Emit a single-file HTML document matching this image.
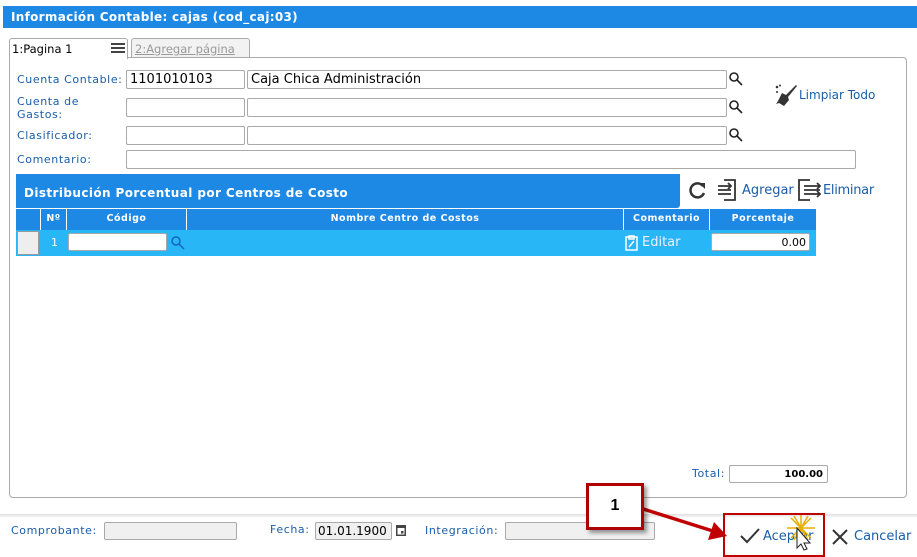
<!DOCTYPE html>
<html><head><meta charset="utf-8"><style>
*{box-sizing:border-box;margin:0;padding:0}
body{width:917px;height:557px;background:#fff;position:relative;overflow:hidden;font-family:"DejaVu Sans","Liberation Sans",sans-serif;font-size:11px;color:#1a5da6}
.a{position:absolute}
.inp{position:absolute;border:1px solid #a9a9a9;background:#fff;border-radius:2px;height:19px;font-size:13px;color:#000;padding-left:3px;line-height:17px}
.lbl{position:absolute;font-size:11px;color:#1a5da6;letter-spacing:.6px}
.th{position:absolute;top:209px;height:21px;color:#fff;font-weight:bold;font-size:9.5px;text-align:center;line-height:20px;border-left:1px solid #fff;letter-spacing:.5px}
</style></head><body>
<div class="a" style="left:3px;top:6px;width:914px;height:22px;background:#1e88e5;color:#fff;font-weight:bold;font-size:12px;line-height:22px;padding-left:8px;letter-spacing:.3px">Información Contable: cajas (cod_caj:03)</div>

<div class="a" style="left:9px;top:57px;width:898px;height:441px;border:1px solid #aaa;border-radius:0 4px 4px 4px"></div>
<div class="a" style="left:9px;top:38px;width:119px;height:21px;border:1px solid #aaa;border-bottom:none;background:#fff;border-radius:3px 3px 0 0;font-size:11.5px;color:#000;padding:3px 0 0 2px">1:Pagina 1</div>
<div class="a" style="left:111px;top:43px;width:14px;height:10px;border-top:2px solid #444;border-bottom:2px solid #444"><div style="margin-top:2px;height:2px;background:#444"></div></div>
<div class="a" style="left:131px;top:38px;width:119px;height:19px;border:1px solid #aaa;border-bottom:none;background:#f2f2f2;border-radius:3px 3px 0 0;font-size:11.5px;color:#999;padding:3px 0 0 3px;text-decoration:underline">2:Agregar página</div>

<div class="lbl" style="left:17px;top:73px">Cuenta Contable:</div>
<div class="inp" style="left:126px;top:70px;width:119px">1101010103</div>
<div class="inp" style="left:247px;top:70px;width:480px">Caja Chica Administración</div>
<div class="lbl" style="left:17px;top:95px;line-height:13px">Cuenta de<br>Gastos:</div>
<div class="inp" style="left:126px;top:98px;width:119px"></div>
<div class="inp" style="left:247px;top:98px;width:480px"></div>
<div class="lbl" style="left:17px;top:129px">Clasificador:</div>
<div class="inp" style="left:126px;top:126px;width:119px"></div>
<div class="inp" style="left:247px;top:126px;width:480px"></div>
<div class="lbl" style="left:17px;top:153px">Comentario:</div>
<div class="inp" style="left:126px;top:150px;width:730px"></div>
<svg class="a" style="left:728px;top:71px" width="16" height="80"><g fill="none" stroke="#222" stroke-width="1.6"><circle cx="6" cy="6" r="4"/><path d="M9 9l5 5"/><circle cx="6" cy="34" r="4"/><path d="M9 37l5 5"/><circle cx="6" cy="62" r="4"/><path d="M9 65l5 5"/></g></svg>
<svg class="a" style="left:774px;top:84px" width="24" height="22"><g fill="#333"><circle cx="3" cy="3" r="1.3"/><circle cx="6" cy="1.5" r="1"/><circle cx="3" cy="8" r="1"/><path d="M8 9l4 2 10-10 1 1-9 11 1 3-5 6-5-3-3 1 2-3z"/></g></svg>
<div class="a" style="left:799px;top:88px;font-size:12px;color:#1a5da6">Limpiar Todo</div>

<div class="a" style="left:16px;top:174px;width:664px;height:34px;background:#1e88e5;border-radius:0 0 3px 0;color:#fff;font-weight:bold;font-size:12px;line-height:38px;padding-left:8px;letter-spacing:.4px">Distribución Porcentual por Centros de Costo</div>
<svg class="a" style="left:688px;top:180px" width="20" height="20"><path d="M15 6A7 7 0 1 0 16 13" fill="none" stroke="#333" stroke-width="2.5"/><path d="M11 3h6v6z" fill="#333"/></svg>
<svg class="a" style="left:716px;top:178px" width="22" height="24"><g fill="none" stroke="#333" stroke-width="1.8"><path d="M8 2h11v20H8"/><path d="M2 8h13M2 12h13M2 16h13"/><path d="M12 5l3 3-3 3" /></g></svg>
<div class="a" style="left:742px;top:183px;font-size:13px;color:#1a5da6">Agregar</div>
<svg class="a" style="left:797px;top:178px" width="26" height="24"><g fill="none" stroke="#333" stroke-width="1.8"><path d="M13 2H2v20h11"/><path d="M7 8h16M7 12h16M7 16h16"/><path d="M20 5l3 3-3 3M20 13l3 3-3 3"/></g></svg>
<div class="a" style="left:823px;top:183px;font-size:13px;color:#1a5da6;letter-spacing:-.3px">Eliminar</div>

<div class="a" style="left:16px;top:209px;width:800px;height:21px;background:#1e88e5"></div>
<div class="th" style="left:40px;width:26px">Nº</div>
<div class="th" style="left:66px;width:120px">Código</div>
<div class="th" style="left:186px;width:437px">Nombre Centro de Costos</div>
<div class="th" style="left:623px;width:86px">Comentario</div>
<div class="th" style="left:709px;width:107px">Porcentaje</div>
<div class="a" style="left:16px;top:230px;width:800px;height:26px;background:#29b6f6"></div>
<div class="a" style="left:17px;top:231px;width:22px;height:24px;background:#eee;border:1px solid #999"></div>
<div class="a" style="left:51px;top:236px;color:#fff;font-size:11px">1</div>
<div class="inp" style="left:68px;top:233px;width:99px;height:18px"></div>
<svg class="a" style="left:170px;top:235px" width="16" height="16"><g fill="none" stroke="#1565c0" stroke-width="1.5"><circle cx="6" cy="6" r="4"/><path d="M9 9l5 5"/></g></svg>
<svg class="a" style="left:625px;top:234px" width="14" height="17"><g fill="none" stroke="#fff" stroke-width="1.5"><rect x="1" y="3" width="11" height="13"/><path d="M4 2h5v3H4zM4 13l5-6"/></g></svg>
<div class="a" style="left:642px;top:235px;color:#eef;font-size:13px">Editar</div>
<div class="inp" style="left:711px;top:233px;width:99px;height:18px;text-align:right;padding-right:3px;font-size:11px">0.00</div>

<div class="lbl" style="left:692px;top:467px">Total:</div>
<div class="inp" style="left:729px;top:465px;width:99px;height:18px;text-align:right;padding-right:4px;font-size:10px;font-weight:bold">100.00</div>

<div class="a" style="left:0;top:514px;width:917px;height:4px;background:linear-gradient(#ddd,#fff)"></div>
<div class="lbl" style="left:11px;top:524px">Comprobante:</div>
<div class="inp" style="left:104px;top:522px;width:133px;height:18px;background:#f0f0f0"></div>
<div class="lbl" style="left:270px;top:523px">Fecha:</div>
<div class="inp" style="left:315px;top:522px;width:77px;height:18px;background:#f0f0f0;font-size:12px;padding-left:2px">01.01.1900</div>
<svg class="a" style="left:395px;top:523px" width="12" height="14"><rect x="1" y="2" width="10" height="11" fill="#444"/><rect x="2.5" y="5" width="7" height="6.5" fill="#fff"/><rect x="6" y="8" width="2.5" height="2.5" fill="#444"/></svg>
<div class="lbl" style="left:425px;top:524px">Integración:</div>
<div class="inp" style="left:505px;top:522px;width:150px;height:18px;background:#f0f0f0"></div>

<svg class="a" style="left:0;top:0" width="917" height="557"><path d="M640 508L716 532" stroke="#c00000" stroke-width="3.5"/><path d="M727 536L708 540 714 522z" fill="#c00000"/></svg>
<div class="a" style="left:586px;top:483px;width:58px;height:47px;border:3px solid #b00000;background:#fff;box-shadow:3px 3px 4px rgba(0,0,0,.4);color:#000;font-weight:bold;font-size:16px;text-align:center;line-height:40px;font-family:'Liberation Sans',sans-serif">1</div>
<div class="a" style="left:723px;top:513px;width:102px;height:44px;border:2px solid #c00000"></div>
<svg class="a" style="left:740px;top:528px" width="20" height="16"><path d="M1 8l6 6L19 1" fill="none" stroke="#333" stroke-width="2"/></svg>
<div class="a" style="left:763px;top:529px;font-size:13px;color:#1a5da6">Aceptar</div>
<svg class="a" style="left:784px;top:514px" width="34" height="40"><g stroke="#e5b000" stroke-width="1.5"><path d="M3 14h28M17 1v26M7 4l20 20M27 4L7 24M10 2l14 24M24 2L10 26"/></g><path d="M13 14v20l4-4 3 6 3-1-3-6h6z" fill="#fff" stroke="#222"/></svg>
<svg class="a" style="left:831px;top:528px" width="18" height="18"><path d="M2 2l14 14M16 2L2 16" stroke="#333" stroke-width="2"/></svg>
<div class="a" style="left:854px;top:529px;font-size:13px;color:#1a5da6">Cancelar</div>
</body></html>
